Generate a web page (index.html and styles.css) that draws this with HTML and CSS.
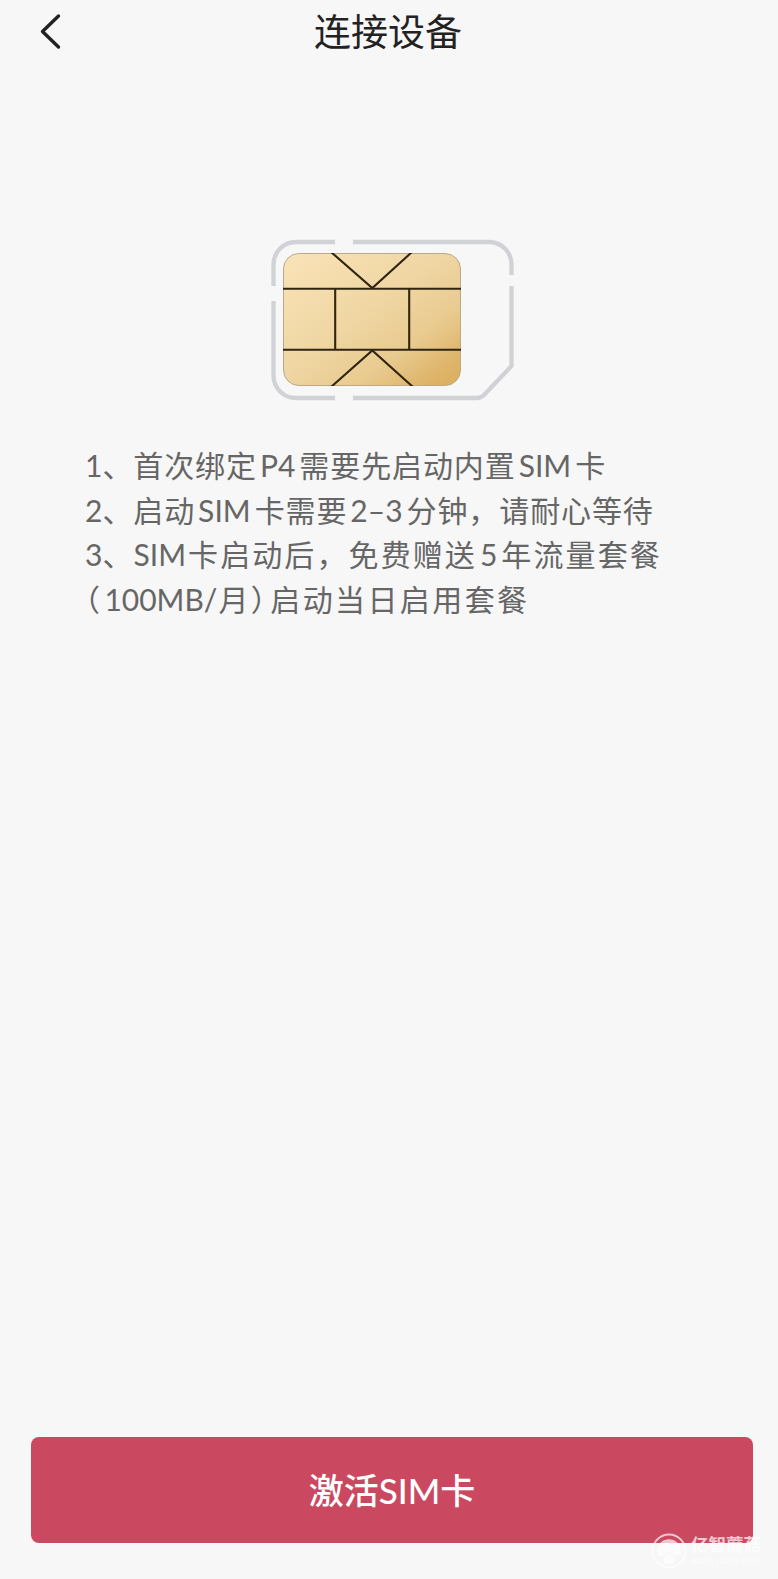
FILE: index.html
```
<!DOCTYPE html>
<html lang="zh-CN">
<head>
    <meta charset="UTF-8">
    <meta name="viewport" content="width=device-width, initial-scale=1.0">
    <title>连接设备</title>
    <link rel="stylesheet" href="styles.css">
</head>
<body>
    <header class="header">
        <a href="#" class="back" aria-label="返回">
            <svg width="24" height="38" viewBox="0 0 24 38" fill="none" stroke="#222" stroke-width="3.4" stroke-linecap="round" stroke-linejoin="round">
                <path d="M20.5 4 L4.5 19.5 L20.5 35"/>
            </svg>
        </a>
        <h1 class="title">连接设备</h1>
    </header>

    <main class="content">
        <svg class="sim" width="246" height="164" viewBox="0 0 246 164" fill="none">
            <defs>
                <linearGradient id="gold" x1="0" y1="0" x2="1" y2="1">
                    <stop offset="0" stop-color="#fae3b8"/>
                    <stop offset="0.45" stop-color="#efd6a3"/>
                    <stop offset="0.7" stop-color="#e9cb90"/>
                    <stop offset="0.88" stop-color="#deb56b"/>
                    <stop offset="1" stop-color="#dcae5c"/>
                </linearGradient>
                <clipPath id="chip">
                    <rect x="12" y="14" width="178" height="133" rx="16"/>
                </clipPath>
            </defs>
            <!-- card outline -->
            <g stroke="#d0d2d5" stroke-width="4.3">
                <path d="M64 3 H25 A22.5 22.5 0 0 0 2.5 25.5 V47"/>
                <path d="M82 3 H218 A22.5 22.5 0 0 1 240.5 25.5 V36"/>
                <path d="M240.5 47 V127 L213 156 Q210 159 206 159 H82"/>
                <path d="M64 159 H25 A22.5 22.5 0 0 1 2.5 136.5 V62"/>
            </g>
            <!-- chip -->
            <rect x="12.5" y="14.5" width="177" height="132" rx="15.5" fill="url(#gold)" stroke="#b9aa8c"/>
            <g clip-path="url(#chip)" stroke="#30250f" stroke-width="2.1">
                <path d="M12 49.7 H190 M12 110.7 H190"/>
                <path d="M64.2 50 V111 M138.2 50 V111"/>
                <path d="M60 13 L101.3 49 L141 13"/>
                <path d="M60 148 L101.3 111.5 L142 148"/>
            </g>
        </svg>

        <div class="tips">
            <p class="tip"><span class="en no">1</span>、首次绑定<span class="en">P4</span>需要先启动内置<span class="en">SIM</span>卡</p>
            <p class="tip"><span class="en no">2</span>、启动<span class="en">SIM</span>卡需要<span class="en">2–3</span>分钟，请耐心等待</p>
            <p class="tip wide"><span class="en no">3</span>、<span class="en first">SIM</span>卡启动后，免费赠送<span class="en">5</span>年流量套餐</p>
            <p class="tip wider"><span class="paren">（</span><span class="en size">100MB/</span>月<span class="paren close">）</span>启动当日启用套餐</p>
        </div>
    </main>

    <footer class="footer">
        <button class="btn">激活<span class="en">SIM</span>卡</button>
        <div class="watermark">
            <svg width="36" height="38" viewBox="0 0 36 38">
                <circle cx="18" cy="19" r="16.5" fill="none" stroke="#fff" stroke-width="2"/>
                <path d="M6 20 C6 3 30 3 30 20 Q29 25 24 24 Q20 20 18 20 Q16 20 12 24 Q7 25 6 20 Z" fill="#fff"/>
                <path d="M18 22 Q23 22 23 27 Q24 32 18 32 Q12 32 13 27 Q13 22 18 22 Z" fill="#fff"/>
            </svg>
            <div class="mark-text">
                <strong>亿智蘑菇</strong>
                <small>www.yzmg.com</small>
            </div>
        </div>
    </footer>
</body>
</html>
```

FILE: styles.css
```
* {
    box-sizing: border-box;
}

body {
    margin: 0;
    height: 100vh;
    display: flex;
    flex-direction: column;
    background: #f7f7f7;
    color: #222;
    font-family: "Noto Sans CJK SC", sans-serif;
    overflow: hidden;
}

.header {
    display: grid;
    grid-template-columns: 79px 1fr 81px;
    align-items: center;
    height: 62px;
}

.back {
    display: flex;
    padding-left: 38px;
}

.title {
    margin: 0;
    font-size: 37px;
    font-weight: 400;
    line-height: 60px;
    padding-bottom: 2px;
    text-align: center;
}

.content {
    flex: 1;
    padding: 177px 85px 0;
}

.sim {
    display: block;
    margin-left: 186px;
}

.tips {
    margin-top: 39px;
    color: #666;
    font-size: 30px;
    line-height: 44.7px;
}

.tip {
    margin: 0;
    height: 44.7px;
    letter-spacing: 0.9px;
    white-space: nowrap;
}

.wide {
    letter-spacing: 2.1px;
}

.wider {
    letter-spacing: 2.4px;
}

.en {
    font-family: Lato, "Noto Sans CJK SC", sans-serif;
    line-height: 0;
    letter-spacing: 0;
    margin: 0 4px 0 3px;
}

.no {
    margin: 0;
}

.first {
    margin: 0 2px 0 -1px;
}

.size {
    margin: 0 1px 0 2px;
}

/* half-width brackets */
.paren {
    font-feature-settings: "halt";
}

.close {
    margin-right: 2px;
}

.footer {
    position: relative;
    padding: 0 25px 36px 31px;
}

.btn {
    display: block;
    width: 100%;
    height: 106px;
    padding: 0 0 4px;
    border: 0;
    border-radius: 8px;
    background: #ca4860;
    color: #fff;
    font-family: inherit;
    font-size: 35px;
    font-weight: 500;
}

.btn .en {
    margin: 0;
}

.watermark {
    position: absolute;
    left: 651px;
    bottom: 9px;
    display: flex;
    gap: 4px;
    color: #fff;
    opacity: 0.7;
}

.mark-text {
    display: flex;
    flex-direction: column;
}

.mark-text strong {
    font-size: 17.5px;
    line-height: 24px;
}

.mark-text small {
    font-family: "Liberation Sans", sans-serif;
    font-size: 10px;
    line-height: 10px;
}
```
